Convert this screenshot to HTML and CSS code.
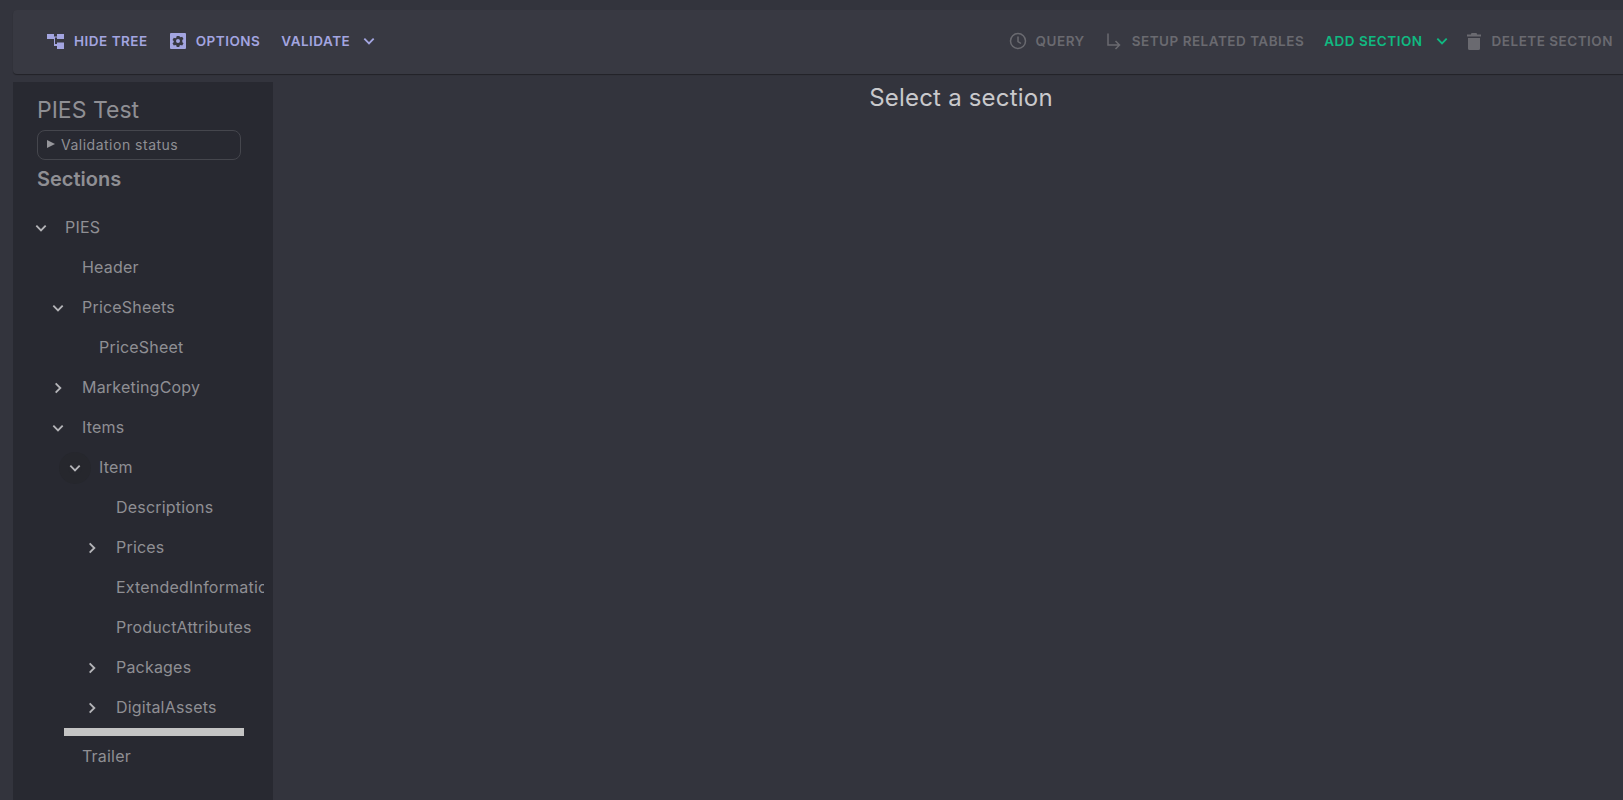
FILE: index.html
```html
<!DOCTYPE html>
<html lang="en">
<head>
    <meta charset="UTF-8">
    <meta name="viewport" content="width=device-width, initial-scale=1.0">
    <title>PIES Test</title>
    <link rel="stylesheet" href="styles.css">
</head>
<body>
    <div class="toolbar">
        <div class="toolbar-group left">
            <button class="tool-btn">
                <svg class="icon" viewBox="0 0 18 18"><path d="M0 2h7v2.500h3V2h7v5h-7V5.500H8V12h2v-1.500h7V17h-7v-3H7V7H5v0H0z" fill="currentColor"/></svg>
                Hide tree
            </button>
            <button class="tool-btn">
                <svg class="icon" viewBox="0 0 18 18"><path fill-rule="evenodd" d="M2 1h14a1 1 0 0 1 1 1v14a1 1 0 0 1-1 1H2a1 1 0 0 1-1-1V2a1 1 0 0 1 1-1zm5.700 3-.3 1.600-1.100.6-1.500-.5-1.300 2.200 1.200 1.100v1.200l-1.200 1 1.300 2.300 1.500-.5 1.100.6.300 1.500h2.600l.3-1.500 1.100-.6 1.500.5 1.300-2.300-1.200-1V8l1.200-1.100-1.300-2.200-1.500.5-1.100-.6L10.300 4zM9 7a2 2 0 1 1 0 4 2 2 0 0 1 0-4z" fill="currentColor"/></svg>
                Options
            </button>
            <button class="tool-btn">
                Validate
                <svg class="chev" viewBox="0 0 12 12"><path d="M2 4l4 4 4-4" /></svg>
            </button>
        </div>
        <div class="toolbar-group">
            <button class="tool-btn off">
                <svg class="icon" viewBox="0 0 18 18"><circle cx="9" cy="9" r="7.500" fill="none" stroke="currentColor" stroke-width="1.500"/><path d="M9 4.500V9.500l3 2" fill="none" stroke="currentColor" stroke-width="1.500"/></svg>
                Query
            </button>
            <button class="tool-btn off">
                <svg class="icon" viewBox="0 0 18 18"><path d="M3 1.500V13h11M10.500 9l4 4-4 4" fill="none" stroke="currentColor" stroke-width="1.500"/></svg>
                Setup related tables
            </button>
            <button class="tool-btn add">
                Add section
                <svg class="chev" viewBox="0 0 12 12"><path d="M2 4l4 4 4-4" /></svg>
            </button>
            <button class="tool-btn off">
                <svg class="icon" viewBox="0 0 18 18"><path d="M6.500 1h5l.7 1.500H16V4.500H2V2.500h3.800zM3 6h12v10.500a1.500 1.500 0 0 1-1.500 1.500h-9A1.500 1.500 0 0 1 3 16.500z" fill="currentColor"/></svg>
                Delete section
            </button>
        </div>
    </div>

    <div class="main">
        <div class="sidebar">
            <h1 class="doc-title">PIES Test</h1>
            <div class="status-box"><span class="arrow"></span>Validation status</div>
            <h2 class="sections-title">Sections</h2>
            <div class="tree">
                <div class="row lvl0"><svg class="chev" viewBox="0 0 12 12"><path d="M2 4l4 4 4-4" /></svg><span>PIES</span></div>
                <div class="row lvl1"><span>Header</span></div>
                <div class="row lvl1"><svg class="chev" viewBox="0 0 12 12"><path d="M2 4l4 4 4-4" /></svg><span>PriceSheets</span></div>
                <div class="row lvl2"><span>PriceSheet</span></div>
                <div class="row lvl1"><svg class="chev" viewBox="0 0 12 12"><path d="M4 2l4 4-4 4" /></svg><span>MarketingCopy</span></div>
                <div class="row lvl1"><svg class="chev" viewBox="0 0 12 12"><path d="M2 4l4 4 4-4" /></svg><span>Items</span></div>
                <div class="row lvl2"><svg class="chev hover" viewBox="0 0 12 12"><path d="M2 4l4 4 4-4" /></svg><span>Item</span></div>
                <div class="row lvl3"><span>Descriptions</span></div>
                <div class="row lvl3"><svg class="chev" viewBox="0 0 12 12"><path d="M4 2l4 4-4 4" /></svg><span>Prices</span></div>
                <div class="row lvl3"><span>ExtendedInformation</span></div>
                <div class="row lvl3"><span>ProductAttributes</span></div>
                <div class="row lvl3"><svg class="chev" viewBox="0 0 12 12"><path d="M4 2l4 4-4 4" /></svg><span>Packages</span></div>
                <div class="row lvl3"><svg class="chev" viewBox="0 0 12 12"><path d="M4 2l4 4-4 4" /></svg><span>DigitalAssets</span></div>
                <div class="scrollbar"></div>
                <div class="row lvl1 trailer"><span>Trailer</span></div>
            </div>
        </div>
        <div class="content">
            <h2>Select a section</h2>
        </div>
    </div>
</body>
</html>
```
FILE: styles.css
```css
html, body {
    height: 100%;
}

body {
    margin: 0;
    padding: 10px 0 0 13px;
    box-sizing: border-box;
    overflow: hidden;
    background: #33343d;
    font-family: Inter, "Noto Sans", sans-serif;
    color: #8f8f94;
}

.toolbar {
    height: 64px;
    box-sizing: border-box;
    display: flex;
    justify-content: space-between;
    align-items: center;
    padding: 0 10px 2px 34px;
    background: #383942;
    border-radius: 4px 0 0 4px;
    box-shadow: 0 1px 1px rgba(0, 0, 0, 0.35);
}

.toolbar-group {
    display: flex;
    align-items: center;
    gap: 20px;
}

.toolbar-group.left {
    gap: 21px;
}

.tool-btn {
    display: flex;
    align-items: center;
    gap: 9px;
    padding: 0;
    border: none;
    background: none;
    font-family: inherit;
    font-size: 13.500px;
    font-weight: 600;
    letter-spacing: 0.5px;
    text-transform: uppercase;
    color: #a3a5e0;
    cursor: pointer;
}

.tool-btn .chev {
    margin: 0 -4px 0 3px;
}

.tool-btn.off {
    color: #6a6a70;
}

.tool-btn.add {
    color: #10b981;
}

.icon {
    width: 18px;
    height: 18px;
}

.chev {
    width: 14px;
    height: 14px;
    fill: none;
    stroke: currentColor;
    stroke-width: 1.6;
}

.main {
    display: flex;
    margin-top: 8px;
    height: 718px;
}

.sidebar {
    width: 260px;
    flex-shrink: 0;
    box-sizing: border-box;
    padding: 15px 0 0 0;
    background: #282931;
    overflow: hidden;
}

.doc-title {
    margin: 0 0 0 24px;
    font-size: 23px;
    font-weight: 400;
    line-height: 27px;
}

.status-box {
    display: flex;
    align-items: center;
    box-sizing: border-box;
    width: 204px;
    height: 30px;
    margin: 6px 0 0 24px;
    padding: 0 0 2px 9px;
    border: 1px solid #45464d;
    border-radius: 8px;
    font-size: 14px;
    letter-spacing: 0.5px;
}

.arrow {
    width: 0;
    height: 0;
    margin-right: 6px;
    border-left: 8px solid #96969b;
    border-top: 4px solid transparent;
    border-bottom: 4px solid transparent;
}

.sections-title {
    margin: 5px 0 0 24px;
    font-size: 20px;
    font-weight: 600;
    line-height: 28px;
}

.tree {
    margin-top: 14px;
    width: 251px;
    overflow: hidden;
}

.row {
    position: relative;
    height: 40px;
    display: flex;
    align-items: center;
    font-size: 16px;
    letter-spacing: 0.2px;
    white-space: nowrap;
}

.row .chev {
    position: absolute;
    top: 14px;
    color: #b4b4b8;
}

.lvl0 { padding-left: 52px; }
.lvl1 { padding-left: 69px; }
.lvl2 { padding-left: 86px; }
.lvl3 { padding-left: 103px; }

.lvl0 .chev { left: 21px; }
.lvl1 .chev { left: 38px; }
.lvl2 .chev { left: 55px; }
.lvl3 .chev { left: 72px; }

.chev.hover {
    border-radius: 50%;
    background: #26272d;
    box-shadow: 0 0 0 9px #26272d;
}

.scrollbar {
    height: 8px;
    margin: 1px 0 0 51px;
    width: 180px;
    background: #c4c4c4;
}

.content {
    flex: 1;
    padding: 1px 0 0 26px;
    text-align: center;
}

.content h2 {
    margin: 0;
    font-size: 24px;
    font-weight: 400;
    letter-spacing: 0.2px;
    line-height: 30px;
    color: #c9c9cc;
}
```
